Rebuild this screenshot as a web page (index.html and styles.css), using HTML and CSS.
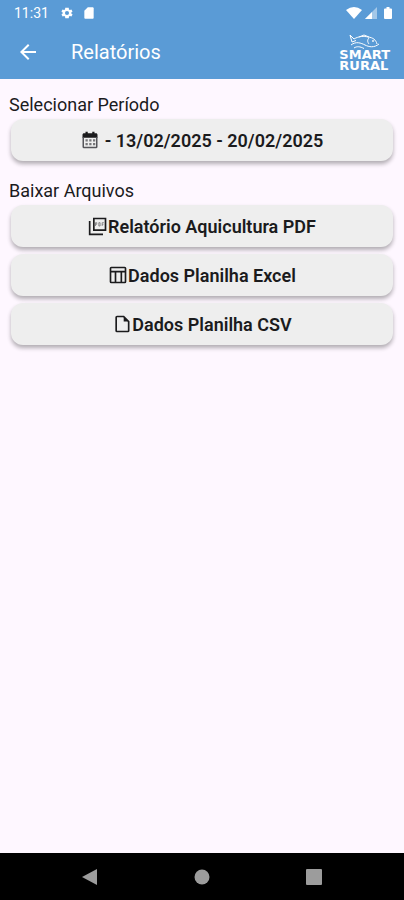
FILE: index.html
```html
<!DOCTYPE html>
<html lang="pt-BR">
<head>
  <meta charset="UTF-8">
  <meta name="viewport" content="width=device-width, initial-scale=1.0">
  <title>Relatórios</title>
  <link rel="stylesheet" href="styles.css">
</head>
<body>
  <header class="header">
    <div class="status-bar">
      <span class="hora">11:31</span>
      <svg class="status-icon engrenagem" viewBox="0 0 24 24"><path fill-rule="evenodd" d="M19.4 13a7.500 7.500 0 0 0 0-2l2.100-1.600-2-3.500-2.500 1a7.700 7.700 0 0 0-1.700-1L15 3H9l-.4 2.900a7.700 7.700 0 0 0-1.700 1l-2.500-1-2 3.500L4.600 11a7.500 7.500 0 0 0 0 2l-2.100 1.600 2 3.500 2.500-1a7.700 7.700 0 0 0 1.700 1L9 21h6l.4-2.900a7.700 7.700 0 0 0 1.700-1l2.500 1 2-3.500zM12 15.500a3.500 3.500 0 1 1 0-7 3.500 3.500 0 0 1 0 7z"/></svg>
      <svg class="status-icon" viewBox="0 0 24 24"><path d="M18 2h-8L4 8v12c0 1.100.9 2 2 2h12c1.100 0 2-.9 2-2V4c0-1.100-.9-2-2-2z"/></svg>
      <div class="status-direita">
        <svg class="wifi" viewBox="0 0 16 12"><path d="M8 12 0 3Q8-3 16 3z"/></svg>
        <svg class="sinal" viewBox="0 0 12 12"><path opacity=".45" d="M12 0v12H0z"/><path d="M7 5v7H0z"/></svg>
        <svg class="bateria" viewBox="0 0 8 12"><path d="M2.500 0h3v1.500H7q1 0 1 1V11q0 1-1 1H1q-1 0-1-1V2.500q0-1 1-1h1.500z"/></svg>
      </div>
    </div>
    <div class="app-bar">
      <button class="voltar" type="button" aria-label="Voltar">
        <svg viewBox="0 0 24 24"><path d="M20 11H7.830l5.590-5.590L12 4l-8 8 8 8 1.410-1.410L7.830 13H20z"/></svg>
      </button>
      <h1>Relatórios</h1>
      <div class="logo">
        <svg class="peixe" viewBox="0 0 32 15"><path d="M1 1 5 5C10 2 15 2 19 3 24 3.500 27 6 28 10M1 1l2 7 4-1.500M10 3l5-2 5 2M20 4c-2 2-1.500 4 0 6M2 11c5-4 10-2 14 0s9 3 14-1M5 14c3-2 6-1.500 10 .5"/><circle cx="24" cy="7" r=".6"/></svg>
        <p>SMART<br>RURAL</p>
      </div>
    </div>
  </header>

  <main class="conteudo">
    <h2>Selecionar Período</h2>
    <button class="botao" type="button">
      <svg class="calendario" viewBox="0 0 24 24"><path d="M2 9V5c0-1.100.9-2 2-2h2V1h3v2h6V1h3v2h2c1.100 0 2 .9 2 2v4z"/><path class="borda" d="M3 8v13q0 1 1 1h16q1 0 1-1V8"/><path class="dias" d="M6 11h3v3H6zM11 11h3v3h-3zM16 11h3v3h-3zM6 16h3v3H6zM11 16h3v3h-3zM16 16h3v3h-3z"/></svg>
      <span>- 13/02/2025 - 20/02/2025</span>
    </button>

    <h2>Baixar Arquivos</h2>
    <div class="lista">
      <button class="botao" type="button">
        <svg viewBox="0 0 24 24"><path class="traco" d="M7 3h14v14H7zM2 6v16h16"/><path class="fino" d="M9 12V8h1.500v2H9M13 8v4h1.500V8zM17 12V8h2M17 10h1.500"/></svg>
        <span>Relatório Aquicultura PDF</span>
      </button>
      <button class="botao" type="button">
        <svg viewBox="0 0 24 24"><path class="traco" d="M4 3h16q1 0 1 1v16q0 1-1 1H4q-1 0-1-1V4q0-1 1-1zM3 8h18M9 8v13M16 8v13"/></svg>
        <span>Dados Planilha Excel</span>
      </button>
      <button class="botao" type="button">
        <svg viewBox="0 0 24 24"><path class="traco" d="M14 3H6q-1 0-1 1v16q0 1 1 1h13q1 0 1-1V9z"/><path d="M14 3v6h6z"/></svg>
        <span>Dados Planilha CSV</span>
      </button>
    </div>
  </main>

  <nav class="nav-bar">
    <button type="button" aria-label="Voltar"><svg viewBox="0 0 16 16"><path d="M15 0v16L0 8z"/></svg></button>
    <button type="button" aria-label="Início"><svg viewBox="0 0 16 16"><circle cx="8" cy="8" r="7.500"/></svg></button>
    <button type="button" aria-label="Recentes"><svg viewBox="0 0 16 16"><rect width="16" height="16" rx="1"/></svg></button>
  </nav>
</body>
</html>
```

FILE: styles.css
```css
* {
  margin: 0;
  padding: 0;
  box-sizing: border-box;
}

body {
  display: flex;
  flex-direction: column;
  min-height: 100vh;
  background-color: #fef7ff;
  color: #1b1b1d;
  font-family: Roboto, "Liberation Sans", sans-serif;
}

button {
  border: none;
  background: none;
  font: inherit;
  color: inherit;
  cursor: pointer;
}

svg {
  display: block;
  flex-shrink: 0;
}

.header {
  background-color: #5a9bd6;
  color: #ffffff;
  fill: #ffffff;
}

.status-bar {
  display: flex;
  align-items: center;
  gap: 8px;
  height: 25px;
  padding: 0 12px 0 14px;
}

.hora {
  font-size: 14px;
}

.status-icon {
  width: 14px;
  height: 14px;
}

.engrenagem {
  margin-left: 3px;
}

.status-direita {
  display: flex;
  align-items: center;
  gap: 3px;
  margin-left: auto;
}

.wifi {
  width: 16px;
  height: 12px;
}

.sinal {
  width: 12px;
  height: 12px;
}

.bateria {
  width: 8px;
  height: 12px;
  margin-left: 4px;
}

.app-bar {
  display: flex;
  align-items: center;
  height: 54px;
  padding: 0 14px 0 16px;
}

.voltar svg {
  width: 24px;
  height: 24px;
}

.app-bar h1 {
  margin-left: 31px;
  font-size: 20px;
  font-weight: 400;
}

.logo {
  margin-left: auto;
  font-family: "DejaVu Sans", sans-serif;
  font-size: 13px;
  font-weight: 700;
  line-height: 11px;
}

.peixe {
  width: 32px;
  height: 15px;
  margin-left: 10px;
  fill: none;
  stroke: #ffffff;
}

.conteudo {
  flex: 1;
  padding: 16px 11px;
}

.conteudo h2 {
  margin: 0 -2px 4px;
  font-size: 18px;
  font-weight: 400;
  line-height: 20px;
}

.botao {
  display: flex;
  justify-content: center;
  align-items: center;
  width: 100%;
  height: 42px;
  border-radius: 12px;
  background-color: #eeeeee;
  box-shadow: 0 3px 4px rgba(0, 0, 0, 0.3);
  font-size: 18px;
  font-weight: 600;
}

.botao + h2 {
  margin-top: 20px;
}

.botao svg {
  width: 20px;
  height: 20px;
  fill: #1b1b1d;
}

.botao .calendario {
  width: 18px;
  height: 18px;
  margin-right: 6px;
}

.calendario .borda {
  fill: none;
  stroke: #55555a;
  stroke-width: 2;
}

.calendario .dias {
  fill: #77777a;
}

.botao .traco {
  fill: none;
  stroke: #1b1b1d;
  stroke-width: 2;
}

.botao .fino {
  fill: none;
  stroke: #77777a;
}

.lista {
  display: flex;
  flex-direction: column;
  gap: 7px;
}

.nav-bar {
  display: flex;
  justify-content: center;
  align-items: center;
  gap: 96px;
  height: 47px;
  background-color: #000000;
}

.nav-bar svg {
  width: 16px;
  height: 16px;
  fill: #9c9c9c;
}
```
